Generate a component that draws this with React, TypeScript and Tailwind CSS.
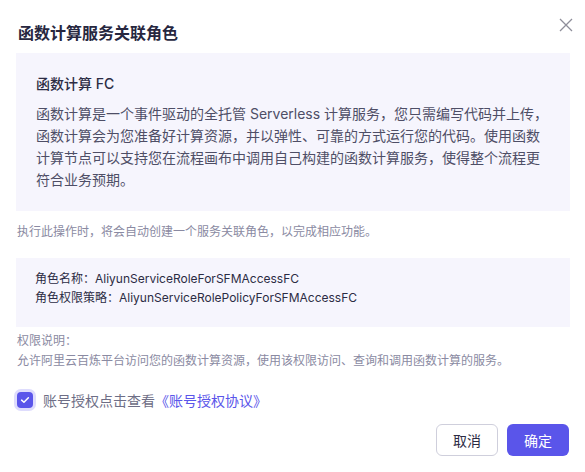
import React, { useState } from 'react';

const font = { fontFamily: 'Inter, "Noto Sans CJK SC", sans-serif' };

export default function App() {
  const [checked, setChecked] = useState(true);

  return (
    <div className="w-[585px] h-[472px] bg-white relative" style={font}>
      <button className="absolute top-[18px] right-[12px] w-[14px] h-[14px] text-[#8e8e9a]">
        <svg viewBox="0 0 14 14" width="14" height="14" fill="none" stroke="currentColor" strokeWidth="1.3">
          <path d="M1 1L13 13M13 1L1 13" />
        </svg>
      </button>

      <div className="px-4 pt-[21px]">
        <h2 className="pl-[2px] text-[16px] leading-6 font-semibold text-[#27273f]">函数计算服务关联角色</h2>

        {/* Intro box */}
        <div className="mt-2 w-[554px] bg-[#f6f5fd] px-5 pt-5 pb-5">
          <div className="text-[14px] leading-[22px] font-medium text-[#2c2c44]">函数计算 FC</div>
          <div className="mt-2 text-[14px] leading-[22px] text-[#4e4e66] whitespace-nowrap">
            <div>函数计算是一个事件驱动的全托管 Serverless 计算服务，您只需编写代码并上传，</div>
            <div>函数计算会为您准备好计算资源，并以弹性、可靠的方式运行您的代码。使用函数</div>
            <div>计算节点可以支持您在流程画布中调用自己构建的函数计算服务，使得整个流程更</div>
            <div>符合业务预期。</div>
          </div>
        </div>

        <p className="mt-[11px] pl-[1px] text-[12px] leading-5 text-[#8a8aa2]">执行此操作时，将会自动创建一个服务关联角色，以完成相应功能。</p>

        {/* Role info */}
        <div className="mt-4 w-[554px] bg-[#f6f5fd] px-[19px] pt-[11px] pb-[20px] text-[12px] leading-[19px] text-[#2c2c44]">
          <div>角色名称：AliyunServiceRoleForSFMAccessFC</div>
          <div>角色权限策略：AliyunServiceRolePolicyForSFMAccessFC</div>
        </div>

        <div className="mt-[4px] pl-[1px] text-[12px] leading-5 text-[#8a8aa2]">
          <div>权限说明：</div>
          <div>允许阿里云百炼平台访问您的函数计算资源，使用该权限访问、查询和调用函数计算的服务。</div>
        </div>

        {/* Agreement */}
        <div className="mt-[17px] flex items-center h-6">
          <button
            onClick={() => setChecked(!checked)}
            className="w-[22px] h-[22px] -ml-[2px] rounded-[7px] bg-[#dedcfd] flex items-center justify-center"
          >
            <span className={`w-4 h-4 rounded-[4px] flex items-center justify-center ${checked ? 'bg-[#5a55ea]' : 'bg-white border border-[#c8c8d8]'}`}>
              {checked && (
                <svg viewBox="0 0 16 16" width="12" height="12" fill="none" stroke="white" strokeWidth="2" strokeLinecap="round" strokeLinejoin="round">
                  <path d="M3.5 8.2L6.6 11L12.5 5" />
                </svg>
              )}
            </span>
          </button>
          <span className="ml-[7px] text-[14px] text-[#6e6e86]">账号授权点击查看</span>
          <a className="text-[14px] text-[#5a55ea] cursor-pointer">《账号授权协议》</a>
        </div>

        {/* Footer */}
        <div className="mt-[12px] flex justify-end gap-[9px]">
          <button className="w-[62px] h-8 rounded-[6px] border border-[#cfcfdc] bg-white text-[14px] text-[#2c2c44]">取消</button>
          <button className="w-[62px] h-8 rounded-[6px] bg-[#5a55ea] text-[14px] text-white">确定</button>
        </div>
      </div>
    </div>
  );
}
